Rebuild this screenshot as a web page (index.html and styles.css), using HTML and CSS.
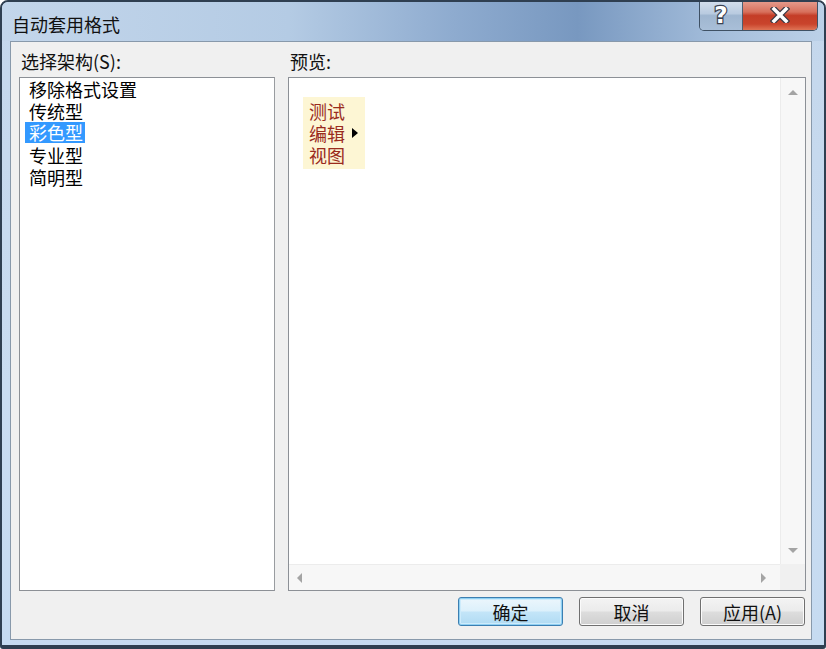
FILE: index.html
```html
<!DOCTYPE html>
<html lang="zh-CN">
<head>
    <meta charset="UTF-8">
    <title>自动套用格式</title>
    <link rel="stylesheet" href="styles.css">
</head>
<body>
    <div class="window">
        <div class="titlebar">
            <span class="title">自动套用格式</span>
            <div class="caption-buttons">
                <div class="cap-btn help">
                    <svg width="20" height="24" viewBox="0 0 20 24">
                        <text x="10" y="20" text-anchor="middle" class="help-glyph">?</text>
                    </svg>
                </div>
                <div class="cap-btn close">
                    <svg width="20" height="16" viewBox="0 0 20 16">
                        <path d="M4 2 L16 14 M16 2 L4 14" stroke="#3b3b46" stroke-width="6" stroke-linecap="square"/>
                        <path d="M4 2 L16 14 M16 2 L4 14" stroke="#ffffff" stroke-width="3.5" stroke-linecap="square"/>
                    </svg>
                </div>
            </div>
        </div>

        <div class="client">
            <div class="panes">
                <div class="pane">
                    <div class="label">选择架构(S):</div>
                    <ul class="listbox">
                        <li>移除格式设置</li>
                        <li>传统型</li>
                        <li class="selected">彩色型</li>
                        <li>专业型</li>
                        <li>简明型</li>
                    </ul>
                </div>
                <div class="pane">
                    <div class="label">预览:</div>
                    <div class="preview">
                        <div class="preview-area">
                            <div class="menu-sample">
                                <div class="menu-item">测试</div>
                                <div class="menu-item">编辑<span class="submenu-arrow"></span></div>
                                <div class="menu-item">视图</div>
                            </div>
                        </div>
                        <div class="vscroll">
                            <span class="arrow up"></span>
                            <span class="arrow down"></span>
                        </div>
                        <div class="hscroll">
                            <span class="arrow left"></span>
                            <span class="arrow right"></span>
                        </div>
                        <div class="corner"></div>
                    </div>
                </div>
            </div>

            <div class="buttons">
                <button class="btn default">确定</button>
                <button class="btn">取消</button>
                <button class="btn">应用(A)</button>
            </div>
        </div>
    </div>
</body>
</html>
```

FILE: styles.css
```css
body {
    margin: 0;
    background: #ffffff;
    font-family: "Noto Sans CJK SC", "Liberation Sans", sans-serif;
    font-size: 18px;
    color: #000;
}

.window {
    box-sizing: border-box;
    width: 826px;
    height: 649px;
    border: 2px solid #2f3f51;
    border-bottom-width: 4px;
    border-radius: 8px 8px 3px 3px;
    background: linear-gradient(180deg, #c4d7ec 0%, #c9dcf1 60%, #c6dbf1 100%);
    display: flex;
    flex-direction: column;
    padding: 0 12px 5px 8px;
    overflow: hidden;
}

.titlebar {
    height: 39px;
    flex: none;
    display: flex;
    align-items: flex-start;
    margin: 0 -12px 0 -8px;
    padding-left: 10px;
    background: linear-gradient(90deg, #c3d6eb 0%, #b4cbe4 35%, #8eabcf 55%, #7898c0 70%, #a6bfdc 88%, #bcd1e8 100%);
}

.title {
    margin-top: 10px;
    line-height: 24px;
    color: #111;
}

.caption-buttons {
    margin-left: auto;
    margin-right: 6px;
    margin-top: -2px;
    display: flex;
    border: 1px solid #3f5164;
    border-top: none;
    border-radius: 0 0 5px 5px;
    overflow: hidden;
}

.cap-btn {
    height: 30px;
    display: flex;
    align-items: center;
    justify-content: center;
}

.cap-btn.help {
    width: 42px;
    border-right: 1px solid #4d5f72;
    background: linear-gradient(180deg, #d6e1ee 0%, #b9cbe0 45%, #9fb6d0 52%, #a9bfd8 100%);
}

.help-glyph {
    font-family: "DejaVu Sans", sans-serif;
    font-weight: bold;
    font-size: 23px;
    fill: #ffffff;
    stroke: #3a4150;
    stroke-width: 2.4px;
    paint-order: stroke;
}

.cap-btn.close {
    width: 74px;
    background: linear-gradient(180deg, #e7a193 0%, #d7705c 40%, #c43d27 52%, #c9442c 80%, #df7456 100%);
}

.client {
    flex: 1;
    display: flex;
    flex-direction: column;
    background: #f0f0f0;
    border: 1px solid #8899ab;
    padding: 8px 5px 13px 8px;
}

.panes {
    flex: 1;
    display: grid;
    grid-template-columns: 256px 1fr;
    gap: 13px;
    min-height: 0;
}

.pane {
    display: flex;
    flex-direction: column;
}

.label {
    line-height: 22px;
    padding-left: 2px;
    margin-bottom: 5px;
    color: #111;
}

.listbox {
    flex: 1;
    margin: 0;
    padding: 0 0 0 5px;
    list-style: none;
    background: #fff;
    border: 1px solid #8c9096;
    border-right-color: #999ca0;
}

.listbox li {
    line-height: 22px;
    padding: 0 2px 0 4px;
    display: table;
}

.listbox li.selected {
    background: #3399ff;
    color: #fff;
    line-height: 21px;
    margin-bottom: 1px;
}

.preview {
    flex: 1;
    display: grid;
    grid-template-columns: 1fr 25px;
    grid-template-rows: 1fr 26px;
    background: #fff;
    border: 1px solid #8c9096;
}

.preview-area {
    padding: 19px 0 0 14px;
}

.menu-sample {
    display: inline-block;
    background: #fdf6d4;
    padding: 3px 7px 3px 6px;
}

.menu-item {
    line-height: 22px;
    color: #9a2b1d;
    display: flex;
    align-items: center;
}

.submenu-arrow {
    width: 0;
    height: 0;
    margin-left: 7px;
    border-top: 5px solid transparent;
    border-bottom: 5px solid transparent;
    border-left: 6px solid #000;
}

.vscroll,
.hscroll {
    display: flex;
    justify-content: space-between;
    align-items: center;
    background: #f7f7f7;
}

.vscroll {
    flex-direction: column;
    border-left: 1px solid #ececec;
    padding: 12px 0 11px;
}

.hscroll {
    border-top: 1px solid #ececec;
    padding: 0 14px 0 8px;
}

.corner {
    background: #f0f0f0;
}

.arrow {
    width: 0;
    height: 0;
}

.arrow.up {
    border-left: 5px solid transparent;
    border-right: 5px solid transparent;
    border-bottom: 5px solid #a4a4a4;
}

.arrow.down {
    border-left: 5px solid transparent;
    border-right: 5px solid transparent;
    border-top: 5px solid #a4a4a4;
}

.arrow.left {
    border-top: 5px solid transparent;
    border-bottom: 5px solid transparent;
    border-right: 5px solid #a4a4a4;
}

.arrow.right {
    border-top: 5px solid transparent;
    border-bottom: 5px solid transparent;
    border-left: 5px solid #a4a4a4;
}

.buttons {
    display: flex;
    justify-content: flex-end;
    gap: 16px;
    margin-top: 6px;
    padding-right: 1px;
}

.btn {
    width: 105px;
    height: 29px;
    font-family: inherit;
    font-size: 18px;
    line-height: 20px;
    color: #111;
    border: 1px solid #707070;
    border-radius: 3px;
    box-shadow: inset 0 0 0 1px #fbfbfb;
    background: linear-gradient(180deg, #f3f3f3 0%, #ebebeb 48%, #dddddd 52%, #cfcfcf 100%);
    padding: 0;
}

.btn.default {
    border-color: #3c7fb1;
    box-shadow: inset 0 0 0 1px #8fd0f3, inset 0 0 0 2px #cdebfb;
    background: linear-gradient(180deg, #ecf6fc 0%, #dcf0fb 48%, #c3e5f8 52%, #b0dbf3 100%);
}
```
